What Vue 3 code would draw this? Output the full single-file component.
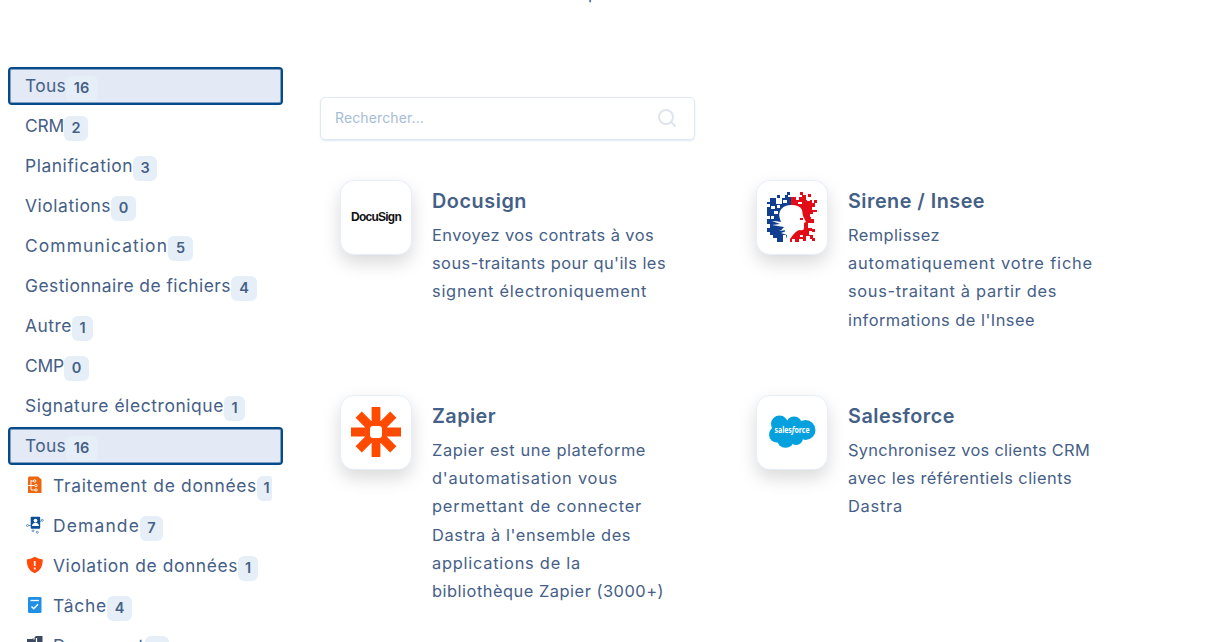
<script setup>
const groups = [
  { label: 'Tous', w: 41, n: 16, bw: 32, active: true },
  { label: 'CRM', w: 39, n: 2, bw: 24 },
  { label: 'Planification', w: 108, n: 3, bw: 24 },
  { label: 'Violations', w: 86, n: 0, bw: 25 },
  { label: 'Communication', w: 143, n: 5, bw: 25 },
  { label: 'Gestionnaire de fichiers', w: 206, n: 4, bw: 26 },
  { label: 'Autre', w: 47, n: 1, bw: 21 },
  { label: 'CMP', w: 39, n: 0, bw: 25 },
  { label: 'Signature électronique', w: 199, n: 1, bw: 21 },
  { label: 'Tous', w: 41, n: 16, bw: 32, active: true },
  { icon: 'data', label: 'Traitement de données', w: 204, n: 1, bw: 15, clip: true },
  { icon: 'request', label: 'Demande', w: 87, n: 7, bw: 23 },
  { icon: 'shield', label: 'Violation de données', w: 185, n: 1, bw: 20 },
  { icon: 'task', label: 'Tâche', w: 54, n: 4, bw: 25 },
  { icon: 'doc', label: 'Document', w: 92, n: 0, bw: 24 }
]
const cards = [
  { logo: 'docusign', title: 'Docusign', w: 95, lines: [['Envoyez vos contrats à vos', 222], ["sous-traitants pour qu'ils les", 234], ['signent électroniquement', 215]] },
  { logo: 'sirene', title: 'Sirene / Insee', w: 137, lines: [['Remplissez', 92], ['automatiquement votre fiche', 245], ['sous-traitant à partir des', 209], ["informations de l'Insee", 187]] },
  { logo: 'zapier', title: 'Zapier', w: 64, lines: [['Zapier est une plateforme', 214], ["d'automatisation vous", 186], ['permettant de connecter', 210], ["Dastra à l'ensemble des", 199], ['applications de la', 149], ['bibliothèque Zapier (3000+)', 232]] },
  { logo: 'salesforce', title: 'Salesforce', w: 107, lines: [['Synchronisez vos clients CRM', 242], ['avec les référentiels clients', 224], ['Dastra', 55]] }
]
// Spreads the letters of a label over the given width.
const vFit = {
  mounted(el, { value }) {
    const natural = el.getBoundingClientRect().width
    el.style.letterSpacing = (value - natural) / el.textContent.length + 'px'
  }
}
</script>

<template>
  <div class="page">
    <div class="lead">p</div>
    <aside class="side">
      <div v-for="(g, i) in groups" :key="i" class="item" :class="{ active: g.active }">
        <span v-if="g.icon" class="ico">
          <svg v-if="g.icon === 'data'" viewBox="0 0 18 18"><path d="M3 .500h9l3.500 3v13.500H2V1.500z" fill="#ec6610" /><path d="M1 9.500h7.500M5 4v10h4M5 5h3" fill="none" stroke="#fff" stroke-width=".9" /><g fill="none" stroke="#fff" stroke-width=".9"><circle cx="8.700" cy="5" r="1.200" /><circle cx="10" cy="9.500" r="1.200" /><circle cx="10" cy="14" r="1.200" /></g></svg>
          <svg v-else-if="g.icon === 'request'" viewBox="0 0 18 18"><rect x="4.700" y=".8" width="9.500" height="12" rx="1" fill="#0b4f94" /><circle cx="9.500" cy="4.600" r="1.900" fill="#fff" /><path d="M6 10c.2-4.300 6.800-4.300 7 0z" fill="#fff" /><g fill="none" stroke="#4f87b8" stroke-width=".9"><circle cx="1.500" cy="9.500" r="1" /><path d="M2.500 9.500H5M14 5.500l1.400-.7" /><circle cx="16.300" cy="4.300" r="1" /><circle cx="7" cy="14.700" r=".9" /><circle cx="11.300" cy="16.300" r="1" /></g></svg>
          <svg v-else-if="g.icon === 'shield'" viewBox="0 0 18 18"><path d="M8.700.8Q12 3 16.800 3.400q.2 10.500-8.100 13.800Q.3 14 .8 3.400 6 3 8.700.8z" fill="#ff4a0b" /><path d="M8.700 5v5M8.700 11.500v1.900" stroke="#fff" stroke-width="1.700" /></svg>
          <svg v-else-if="g.icon === 'task'" viewBox="0 0 18 18"><rect x="2" y="1" width="13.500" height="16" rx="1.300" fill="#218fe5" /><path d="M4.500 4.500h8.500" stroke="#fff" stroke-width="1.300" /><path d="m5.500 10.500 2.200 2.200 4.300-4.400" fill="none" stroke="#fff" stroke-width="1.500" /></svg>
          <svg v-else viewBox="0 0 18 18"><path d="M1 3h5l4-3h6.500v16H1z" fill="#3d4b60" /><path d="M1 1.500 8 1v2.500M10.500 2v12" fill="none" stroke="#fff" stroke-width="1.200" /></svg>
        </span>
        <span v-fit="g.w" class="label">{{ g.label }}</span>
        <span class="badge" :class="{ clip: g.clip }" :style="{ width: g.bw + 'px' }">{{ g.n }}</span>
      </div>
    </aside>
    <main class="main">
      <div class="search">
        <span v-fit="89">Rechercher...</span>
        <svg viewBox="0 0 20 20"><circle cx="9" cy="9" r="7" /><path d="m14 14 4 4" /></svg>
      </div>
      <div class="grid">
        <section v-for="c in cards" :key="c.title" class="card">
          <div class="tile">
            <span v-if="c.logo === 'docusign'" v-fit="50" class="docu">DocuSign</span>
            <svg v-else-if="c.logo === 'sirene'" class="logo" viewBox="0 0 50 50" shape-rendering="crispEdges">
              <path fill="#103f91" d="M3 6h6v6h6V6h3V3h3v2h3v18l-8 14 5 3v3h-5v7h-6v-4H6v-3H3v-3H0v-4h3v-4H0v-5h3v-3H0v-9h3v-3H0v-2h3zM10 3h3v3h-3zM20 0h3v3h-3zM19 43h3v3h-3z" />
              <path fill="#e30d17" d="M24 5h5v3h3V5h3V3h4v5h6v3h2V8h3v3h-2v4h-3v3h5v2h-4v5h-2v2h3v4h-6v5h4v3h-3v4h4v4h-3v-3h-4v5h-3v-2h-4v3h-4v-3h-3v3h-2V32zM33 0h3v3h-3zM41 2h3v3h-3zM45 37h3v3h-3zM45 46h3v3h-3z" />
              <path fill="#fff" shape-rendering="auto" d="M13 27C10 19 16 13 24 13q9 0 11 5l1 6 3 6-2 1v5q0 3-4 2-4 0-10 9l-4 1 1-5-6-2q4-1 6-3l-8 1q3-1 5-4l-12-2 8-1-8-3q5 0 9 1z" />
              <path fill="#fff" d="M4 14h4v3H4zM10 13h3v3h-3zM16 8h4v3h-4zM7 19h4v3H7zM4 24h3v3H4zM31 10h4v2h-4zM40 6h3v3h-3zM43 22h3v3h-3zM33 43h3v2h-3z" />
              <path fill="#e30d17" d="M33 26h3v2h-3zM37 32h3v2h-3z" />
            </svg>
            <svg v-else-if="c.logo === 'zapier'" class="logo" viewBox="0 0 50 50"><g stroke="#ff4a00" stroke-width="8.800"><path d="M25 0v50M0 25h50M7.700 7.700l34.600 34.600M42.300 7.700 7.700 42.300" /></g><rect x="19" y="19" width="12" height="12" rx="3" fill="#fff" /></svg>
            <svg v-else class="logo" viewBox="0 0 50 50"><g fill="#05a1df"><circle cx="12.500" cy="17" r="8.500" /><circle cx="27" cy="17.500" r="8" /><circle cx="38.500" cy="23" r="10" /><circle cx="10" cy="27.500" r="8" /><circle cx="18.500" cy="32" r="8.700" /><circle cx="29" cy="31" r="7" /><path d="M12 16h24v14H12z" /></g><text x="7.500" y="26.200" textLength="35" lengthAdjust="spacingAndGlyphs">sales<tspan font-style="italic">f</tspan>orce</text></svg>
          </div>
          <div class="copy">
            <h2><span v-fit="c.w">{{ c.title }}</span></h2>
            <p v-for="l in c.lines" :key="l[0]"><span v-fit="l[1]">{{ l[0] }}</span></p>
          </div>
        </section>
      </div>
    </main>
  </div>
</template>

<style>
body { background: #fff; overflow: hidden; }
</style>
<style scoped>
.page { position: relative; height: 642px; overflow: hidden; display: flex; font-family: Inter, "Liberation Sans", sans-serif; color: #456087; }
.lead { position: absolute; left: 588px; top: -17px; font-size: 17px; line-height: 20px; }
.side { width: 275px; margin: 67px 0 0 8px; flex: none; }
.item { box-sizing: border-box; height: 38px; margin-bottom: 2px; padding-left: 17px; display: flex; align-items: flex-start; white-space: nowrap; font-size: 17.400px; line-height: 37px; border-radius: 4px; }
.item.active { background: #e3eaf5; border: 2px solid #064b89; box-shadow: inset 0 0 0 1px #7f9fc3; padding-left: 15px; line-height: 33px; }
.ico { width: 18px; height: 18px; margin: 9px 9px 0 1px; line-height: 0; flex: none; }
.ico svg { width: 18px; height: 18px; }
.label { flex: none; }
.badge { box-sizing: border-box; height: 25px; margin-top: 9px; line-height: 24px; border-radius: 6px; background: #e6eff8; font-size: 14.500px; font-weight: 600; text-align: center; flex: none; }
.active .badge { margin-top: 7px; padding-right: 1px; }
.badge.clip { overflow: hidden; border-radius: 6px 3px 3px 6px; padding-left: 4px; }
.main { margin: 97px 0 0 37px; width: 850px; flex: none; }
.search { box-sizing: border-box; width: 375px; height: 43px; border: 1px solid #e0e8f5; border-radius: 5px; padding: 0 17px 2px 14px; display: flex; align-items: center; justify-content: space-between; font-size: 14px; color: #a6bdd6; box-shadow: 0 1px 2px #dfe7f2; }
.search svg { width: 20px; height: 20px; fill: none; stroke: #dfe4ed; stroke-width: 2; stroke-linecap: round; }
.grid { display: grid; grid-template-columns: 416px 416px; grid-template-rows: 215px 230px; padding: 40px 0 0 20px; }
.card { display: flex; align-items: flex-start; gap: 20px; }
.tile { box-sizing: border-box; width: 72px; height: 75px; border: 1px solid #e6eff9; border-radius: 14px; background: #fff; box-shadow: 0 8px 18px rgba(0, 0, 0, .15); display: flex; align-items: flex-start; justify-content: center; padding-top: 11px; flex: none; }
.logo { width: 50px; height: 50px; flex: none; overflow: visible; }
.logo text { font: 700 8px "Open Sans", sans-serif; fill: #fff; }
.docu { font: 700 12px/50px "Liberation Sans", sans-serif; color: #111; }
.copy { padding-top: 6px; white-space: nowrap; }
h2 { margin: 0 0 5px; font-size: 19.800px; line-height: 30px; font-weight: 600; }
p { margin: 0; font-size: 16.400px; line-height: 28.200px; }
</style>
